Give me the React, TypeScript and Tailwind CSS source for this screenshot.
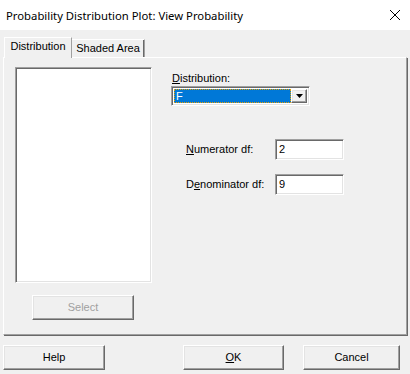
const raised =
  "border border-t-white border-l-white border-r-[#696969] border-b-[#696969] shadow-[inset_-1px_-1px_0_#a0a0a0,inset_1px_1px_0_#e3e3e3]";
const sunken =
  "border border-t-[#a0a0a0] border-l-[#a0a0a0] border-r-white border-b-white shadow-[inset_1px_1px_0_#696969,inset_-1px_-1px_0_#e3e3e3]";

const Btn = ({ label, className = "", disabled = false }: { label: React.ReactNode; className?: string; disabled?: boolean }) => (
  <button
    className={`flex h-[25px] items-center justify-center bg-[#f0f0f0] ${raised} ${disabled ? "text-[#a0a0a0]" : "text-black"} ${className}`}
  >
    {label}
  </button>
);

const Field = ({ label, value }: { label: React.ReactNode; value: string }) => (
  <div className="flex h-[21px] items-center">
    <span className="w-[89px]">{label}</span>
    <div className={`flex h-[21px] w-[69px] items-center bg-white px-[3px] ${sunken}`}>{value}</div>
  </div>
);

export default function App() {
  return (
    <div className="flex h-[374px] w-[410px] flex-col bg-[#f0f0f0] font-['Tahoma','Liberation_Sans',sans-serif] text-[11px] text-black">
      <div className="flex h-[30px] items-center justify-between bg-white pl-[6px] pr-[7px] font-['Segoe_UI','Noto_Sans',sans-serif] text-[11.3px]">
        <span className="pt-[2px]">Probability Distribution Plot: View Probability</span>
        <svg width="12" height="12" viewBox="0 0 12 12" className="mr-[2px]">
          <path d="M1 1L11 11M11 1L1 11" stroke="#000" strokeWidth="1" />
        </svg>
      </div>

      <div className="flex items-end px-[4px] pt-[7px]">
        <div className="relative z-10 -mb-px flex h-[21px] w-[68px] items-center justify-center border border-b-0 border-t-white border-l-white border-r-[#a0a0a0] bg-[#f0f0f0] pb-[3px]">
          Distribution
        </div>
        <div className="flex h-[18px] w-[73px] items-center justify-center border border-b-0 border-l-0 border-t-white border-r-[#a0a0a0] bg-[#f0f0f0] shadow-[inset_-1px_0_0_#696969]">
          Shaded Area
        </div>
      </div>

      <div className="mx-[3px] flex h-[278px] border border-t-white border-l-white border-r-[#a0a0a0] border-b-[#a0a0a0] shadow-[1px_1px_0_#696969]">
        <div className="flex flex-col pl-[11px] pt-[9px]">
          <div className={`h-[216px] w-[137px] bg-white ${sunken}`} />
          <Btn label="Select" disabled className="ml-[17px] mt-[12px] w-[102px]" />
        </div>

        <div className="ml-[19px] flex flex-col pt-[12px]">
          <span className="ml-[1px] h-[16px]">
            <u>D</u>istribution:
          </span>
          <div className={`flex h-[20px] w-[139px] bg-white p-[2px] ${sunken}`}>
            <div className="flex h-full flex-1 items-center border border-dotted border-[#e8a000] bg-[#0078d7] px-[1px] text-white">
              F
            </div>
            <div className={`flex h-full w-[16px] items-center justify-center bg-[#f0f0f0] ${raised}`}>
              <svg width="7" height="4" viewBox="0 0 7 4">
                <path d="M0 0H7L3.5 4Z" fill="#000" />
              </svg>
            </div>
          </div>

          <div className="ml-[15px] mt-[33px] flex flex-col gap-[14px]">
            <Field label={<><u>N</u>umerator df:</>} value="2" />
            <Field label={<>D<u>e</u>nominator df:</>} value="9" />
          </div>
        </div>
      </div>

      <div className="flex px-[3px] pt-[10px]">
        <Btn label="Help" className="w-[102px]" />
        <Btn label={<><u>O</u>K</>} className="ml-[78px] w-[101px]" />
        <Btn label="Cancel" className="ml-[19px] w-[97px]" />
      </div>
    </div>
  );
}
